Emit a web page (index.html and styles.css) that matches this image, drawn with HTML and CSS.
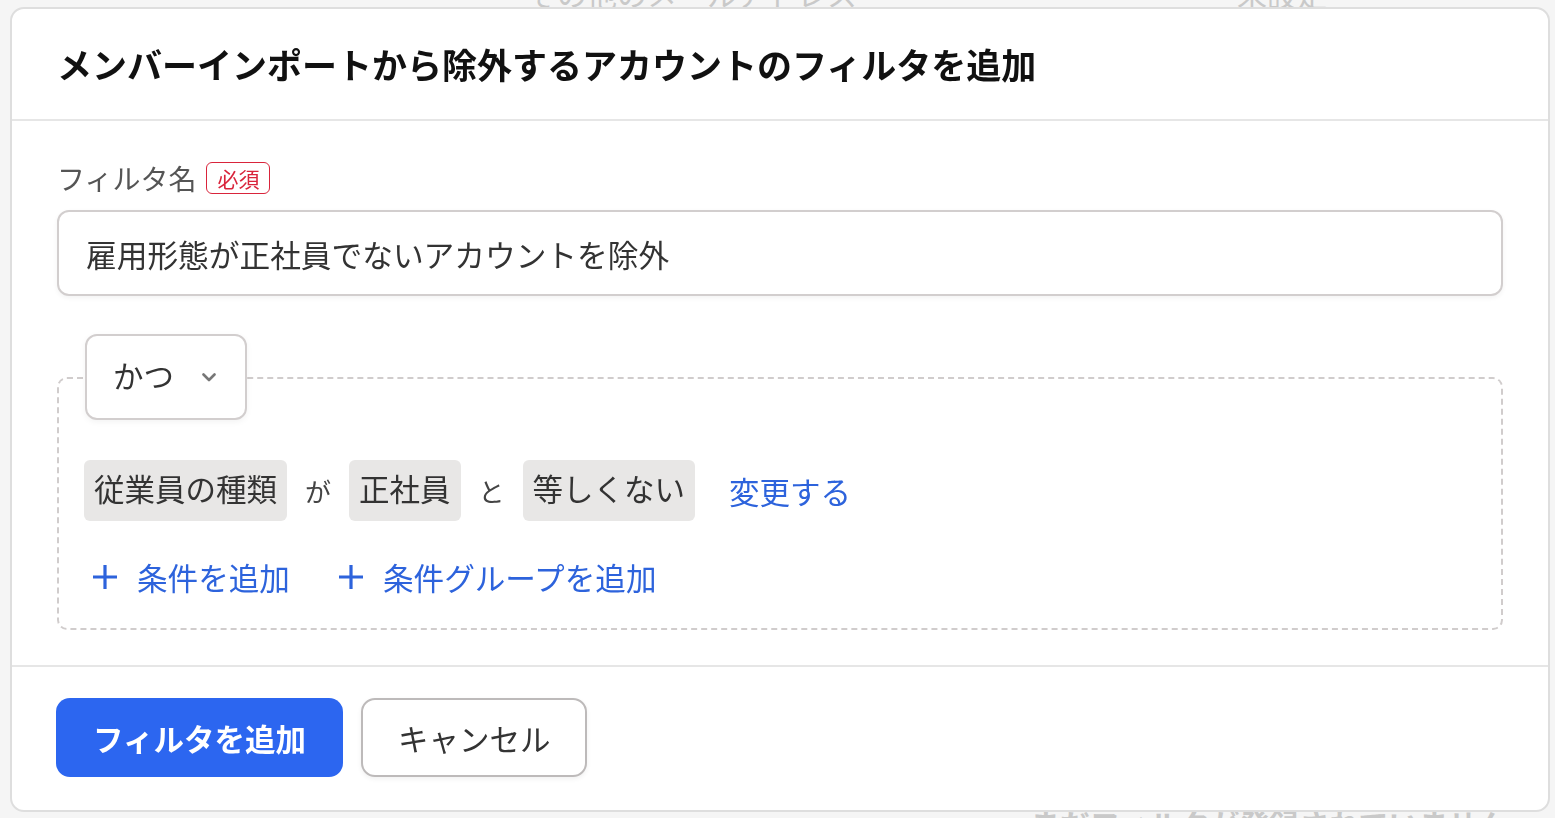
FILE: index.html
```html
<!DOCTYPE html>
<html lang="ja">
<head>
    <meta charset="UTF-8">
    <meta name="viewport" content="width=device-width, initial-scale=1.0">
    <title>フィルタを追加</title>
    <link rel="stylesheet" href="styles.css">
</head>
<body>

<!-- 背面のページ -->
<div class="backdrop">
    <div class="bg-row-top">
        <span class="bg-col-email">その他のメールアドレス</span>
        <span class="bg-col-status">未設定</span>
    </div>
    <div class="bg-row-bottom">
        <span>まだフィルタが登録されていません</span>
    </div>
</div>

<!-- モーダル -->
<div class="overlay">
    <div class="modal">
        <header class="modal-header">
            <h1>メンバーインポートから除外するアカウントのフィルタを追加</h1>
        </header>

        <section class="modal-body">
            <div class="field-label">
                <label for="filter-name">フィルタ名</label>
                <span class="required">必須</span>
            </div>
            <input type="text" id="filter-name" class="text-input" value="雇用形態が正社員でないアカウントを除外">

            <div class="condition-group">
                <button type="button" class="operator-select">
                    <span>かつ</span>
                    <svg width="14" height="9" viewBox="0 0 14 9"><polyline points="1.5,1.5 7,7 12.5,1.5" fill="none" stroke="#777" stroke-width="2.6" stroke-linecap="round" stroke-linejoin="round"/></svg>
                </button>

                <div class="condition-row">
                    <span class="chip">従業員の種類</span>
                    <span class="particle">が</span>
                    <span class="chip">正社員</span>
                    <span class="particle">と</span>
                    <span class="chip">等しくない</span>
                    <a href="#" class="link change-link">変更する</a>
                </div>

                <div class="add-row">
                    <a href="#" class="link add-link">
                        <svg width="26" height="26" viewBox="0 0 26 26"><path d="M13 1v24M1 13h24" stroke="currentColor" stroke-width="3.2"/></svg>
                        条件を追加
                    </a>
                    <a href="#" class="link add-link">
                        <svg width="26" height="26" viewBox="0 0 26 26"><path d="M13 1v24M1 13h24" stroke="currentColor" stroke-width="3.2"/></svg>
                        条件グループを追加
                    </a>
                </div>
            </div>
        </section>

        <footer class="modal-footer">
            <button type="button" class="btn btn-primary">フィルタを追加</button>
            <button type="button" class="btn btn-secondary">キャンセル</button>
        </footer>
    </div>
</div>

</body>
</html>
```

FILE: styles.css
```css
/* Reset */
* {
    margin: 0;
    padding: 0;
    box-sizing: border-box;
}

body {
    font-family: "Noto Sans CJK JP", "Noto Sans", sans-serif;
    background-color: #f5f5f5;
    color: #333;
    height: 818px;
    overflow: hidden;
}

/* Background page */
.backdrop {
    height: 818px;
    display: flex;
    flex-direction: column;
    justify-content: space-between;
    color: #c9c9c9;
    font-size: 30px;
    line-height: 30px;
}

.bg-row-top {
    display: flex;
    margin-top: -22px;
    padding-left: 527px;
}

.bg-col-status {
    margin-left: 380px;
}

.bg-row-bottom {
    margin-bottom: -20px;
    padding-left: 1030px;
    font-weight: 700;
}

/* Modal */
.overlay {
    position: fixed;
    inset: 0;
    padding: 7px 0 0 10px;
}

.modal {
    width: 1540px;
    background-color: white;
    border: 2px solid #dedede;
    border-radius: 14px;
}

.modal-header {
    padding: 36px 45px;
    border-bottom: 2px solid #e6e6e6;
}

.modal-header h1 {
    font-size: 35px;
    line-height: 38px;
    font-weight: 700;
    color: #111;
}

.modal-body {
    padding: 40px 45px 35px;
    border-bottom: 2px solid #e6e6e6;
}

/* Field */
.field-label {
    display: flex;
    align-items: center;
    gap: 10px;
    height: 34px;
    margin-bottom: 15px;
    font-size: 28px;
    color: #555;
}

.required {
    font-size: 21px;
    line-height: 30px;
    padding: 0 10px;
    color: #d9243b;
    border: 1.5px solid #d9243b;
    border-radius: 6px;
}

.text-input {
    display: block;
    width: 100%;
    height: 86px;
    padding: 0 27px;
    font-family: inherit;
    font-size: 30.7px;
    color: #333;
    border: 2px solid #d2cece;
    border-radius: 12px;
    box-shadow: 0 2px 5px rgba(0, 0, 0, 0.05);
    outline: none;
}

/* Condition group */
.condition-group {
    margin-top: 81px;
    padding: 0 25px 28px;
    border: 2px dashed #d0cccc;
    border-radius: 10px;
}

.operator-select {
    display: flex;
    align-items: center;
    gap: 28px;
    width: 162px;
    height: 86px;
    margin: -45px 0 0 1px;
    padding: 0 20px 4px 26px;
    font-family: inherit;
    font-size: 30.5px;
    white-space: nowrap;
    color: #333;
    background-color: white;
    border: 2px solid #d2cece;
    border-radius: 12px;
    box-shadow: 0 2px 6px rgba(0, 0, 0, 0.05);
}

.operator-select svg {
    margin-top: 4px;
}

.condition-row {
    display: flex;
    align-items: center;
    gap: 18px;
    margin-top: 40px;
}

.chip {
    height: 61px;
    line-height: 57px;
    padding: 0 10px;
    font-size: 30.5px;
    color: #333;
    background-color: #e8e7e6;
    border-radius: 6px;
}

.particle {
    font-size: 26px;
    color: #444;
}

.link {
    color: #2d63dc;
    text-decoration: none;
    font-size: 30.5px;
}

.change-link {
    margin-left: 16px;
}

.add-row {
    display: flex;
    align-items: center;
    gap: 40px;
    height: 46px;
    margin-top: 33px;
}

.add-link {
    display: flex;
    align-items: center;
    gap: 19px;
    padding-left: 8px;
    font-size: 30.6px;
}

/* Footer */
.modal-footer {
    display: flex;
    gap: 18px;
    padding: 31px 44px 33px;
}

.btn {
    height: 79px;
    padding: 0 37px;
    font-family: inherit;
    font-size: 30.5px;
    border-radius: 14px;
    cursor: pointer;
}

.btn-primary {
    color: white;
    font-weight: 700;
    background-color: #2c66f0;
    border: none;
}

.btn-secondary {
    padding: 0 35px;
    color: #333;
    background-color: white;
    border: 2px solid #bdbaba;
    box-shadow: 0 2px 5px rgba(0, 0, 0, 0.06);
}
```
